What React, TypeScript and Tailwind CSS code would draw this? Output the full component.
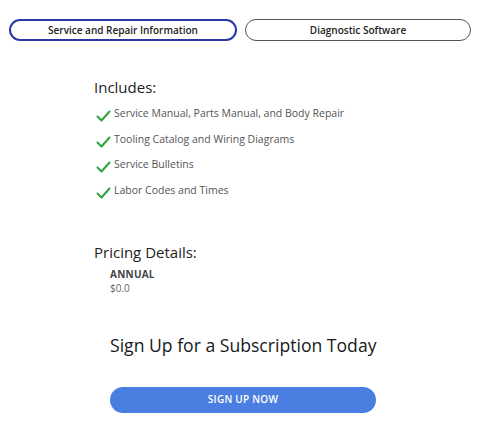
import React from 'react';

const items = [
  'Service Manual, Parts Manual, and Body Repair',
  'Tooling Catalog and Wiring Diagrams',
  'Service Bulletins',
  'Labor Codes and Times',
];

const Check = () => (
  <svg width="15" height="12" viewBox="0 0 15 12" className="shrink-0 mt-[5px]">
    <path d="M1.5 6.5 L5.5 10.5 L13.5 1.5" fill="none" stroke="#2fa33a" strokeWidth="2" strokeLinecap="round" strokeLinejoin="round" />
  </svg>
);

export default function App() {
  return (
    <div className="w-[480px] h-[433px] bg-white text-[#222]" style={{ fontFamily: '"Open Sans", "Liberation Sans", sans-serif' }}>
      <div className="flex gap-2 px-[9px] pt-[19px]">
        <button className="flex-1 h-[22px] rounded-full border-2 border-[#2a37a8] text-[10px] font-semibold text-[#222]">
          Service and Repair Information
        </button>
        <button className="flex-1 h-[22px] rounded-full border border-[#555] text-[10px] font-semibold text-[#222]">
          Diagnostic Software
        </button>
      </div>

      <div className="pl-[94px] pt-[36px]">
        <h2 className="text-[15px] leading-[20px] font-medium text-[#222]">Includes:</h2>
        <ul className="mt-[8px] flex flex-col gap-[8.5px]">
          {items.map((t) => (
            <li key={t} className="flex items-start gap-[3px] pl-[2px] text-[10.5px] leading-[17px] text-[#555]">
              <Check />
              <span>{t}</span>
            </li>
          ))}
        </ul>

        <h2 className="mt-[43px] text-[15px] leading-[20px] font-medium text-[#222]">Pricing Details:</h2>
        <div className="pl-[16px] mt-[5px]">
          <div className="text-[10px] leading-[14px] font-bold tracking-wide text-[#444]">ANNUAL</div>
          <div className="text-[10px] leading-[14px] text-[#666]">$0.0</div>
        </div>
      </div>

      <div className="pl-[110px] w-[376px] box-content">
        <h1 className="mt-[38px] text-[17.6px] leading-[24px] font-medium text-[#171a20]">Sign Up for a Subscription Today</h1>
        <button className="mt-[30px] w-[266px] h-[26px] rounded-full bg-[#4a7ee0] text-white text-[10px] font-semibold tracking-wide">
          SIGN UP NOW
        </button>
      </div>
    </div>
  );
}
